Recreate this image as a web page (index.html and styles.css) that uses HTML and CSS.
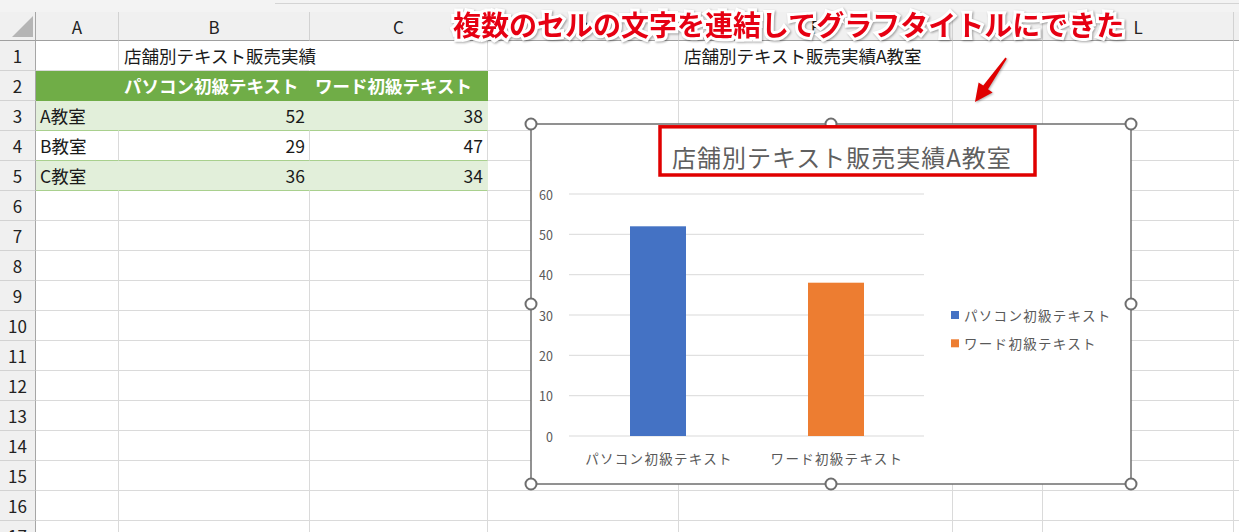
FILE: index.html
```html
<!DOCTYPE html>
<html lang="ja">
<head>
<meta charset="utf-8">
<title>店舗別テキスト販売実績</title>
<link rel="stylesheet" href="styles.css">
</head>
<body>
<div class="top"><div class="topline"></div></div>
<div class="sheet">
  <div class="corner"><span class="tri"></span></div>
  <div class="ch">A</div><div class="ch">B</div><div class="ch">C</div><div class="ch">D</div><div class="ch">F</div><div class="ch">K</div><div class="ch">L</div><div class="ch"></div>

  <div class="rh">1</div><div></div><div class="over">店舗別テキスト販売実績</div><div></div><div></div><div class="tx">店舗別テキスト販売実績A教室</div><div></div><div></div><div></div>

  <div class="rh">2</div><div class="g2"></div><div class="g2">パソコン初級テキスト</div><div class="g2">ワード初級テキスト</div><div></div><div></div><div></div><div></div><div></div>

  <div class="rh">3</div><div class="g3">A教室</div><div class="g3 num">52</div><div class="g3 num">38</div><div></div><div></div><div></div><div></div><div></div>

  <div class="rh">4</div><div class="w4">B教室</div><div class="w4 num">29</div><div class="w4 num">47</div><div></div><div></div><div></div><div></div><div></div>

  <div class="rh">5</div><div class="g3">C教室</div><div class="g3 num">36</div><div class="g3 num">34</div><div></div><div></div><div></div><div></div><div></div>

  <div class="rh">6</div><div></div><div></div><div></div><div></div><div></div><div></div><div></div><div></div>
  <div class="rh">7</div><div></div><div></div><div></div><div></div><div></div><div></div><div></div><div></div>
  <div class="rh">8</div><div></div><div></div><div></div><div></div><div></div><div></div><div></div><div></div>
  <div class="rh">9</div><div></div><div></div><div></div><div></div><div></div><div></div><div></div><div></div>
  <div class="rh">10</div><div></div><div></div><div></div><div></div><div></div><div></div><div></div><div></div>
  <div class="rh">11</div><div></div><div></div><div></div><div></div><div></div><div></div><div></div><div></div>
  <div class="rh">12</div><div></div><div></div><div></div><div></div><div></div><div></div><div></div><div></div>
  <div class="rh">13</div><div></div><div></div><div></div><div></div><div></div><div></div><div></div><div></div>
  <div class="rh">14</div><div></div><div></div><div></div><div></div><div></div><div></div><div></div><div></div>
  <div class="rh">15</div><div></div><div></div><div></div><div></div><div></div><div></div><div></div><div></div>
  <div class="rh">16</div><div></div><div></div><div></div><div></div><div></div><div></div><div></div><div></div>
  <div class="rh">17</div><div></div><div></div><div></div><div></div><div></div><div></div><div></div><div></div>
</div>

<svg class="chart" width="614" height="374" viewBox="-7 -7 614 374">
  <rect class="frame" x="0" y="0" width="600" height="360"/>
  <g class="grid">
    <line x1="38" x2="393" y1="312" y2="312"/>
    <line x1="38" x2="393" y1="271.7" y2="271.7"/>
    <line x1="38" x2="393" y1="231.3" y2="231.3"/>
    <line x1="38" x2="393" y1="191" y2="191"/>
    <line x1="38" x2="393" y1="150.7" y2="150.7"/>
    <line x1="38" x2="393" y1="110.3" y2="110.3"/>
    <line x1="38" x2="393" y1="70" y2="70"/>
  </g>
  <g class="axis">
    <text x="22" y="312">0</text>
    <text x="22" y="271.7">10</text>
    <text x="22" y="231.3">20</text>
    <text x="22" y="191">30</text>
    <text x="22" y="150.7">40</text>
    <text x="22" y="110.3">50</text>
    <text x="22" y="70">60</text>
  </g>
  <rect class="bar-blue" x="99" y="102.3" width="56" height="209.7"/>
  <rect class="bar-orange" x="277" y="158.7" width="56" height="153.3"/>
  <g class="cat">
    <text x="128" y="334">パソコン初級テキスト</text>
    <text x="306" y="334">ワード初級テキスト</text>
  </g>
  <rect class="bar-blue" x="420" y="187" width="8" height="8"/>
  <text class="legend" x="433" y="191">パソコン初級テキスト</text>
  <rect class="bar-orange" x="420" y="215.3" width="8" height="8"/>
  <text class="legend" x="433" y="219">ワード初級テキスト</text>
  <g class="handle">
    <circle cx="0" cy="0" r="5.5"/>
    <circle cx="300" cy="0" r="5.5"/>
    <circle cx="600" cy="0" r="5.5"/>
    <circle cx="0" cy="180" r="5.5"/>
    <circle cx="600" cy="180" r="5.5"/>
    <circle cx="0" cy="360" r="5.5"/>
    <circle cx="300" cy="360" r="5.5"/>
    <circle cx="600" cy="360" r="5.5"/>
  </g>
  <rect class="titlebox" x="129" y="2.8" width="375" height="48.2"/>
  <text class="title" x="141" y="32">店舗別テキスト販売実績A教室</text>
</svg>

<div class="note">複数のセルの文字を連結してグラフタイトルにできた</div>

<svg class="arrow" width="50" height="60" viewBox="965 50 50 60">
  <polygon points="975,102 978.6,82.4 983.2,85.6 1005.4,57.5 1006.8,58.7 988,89.2 992.6,92.4"/>
</svg>
</body>
</html>
```

FILE: styles.css
```css
html, body {
  margin: 0;
  padding: 0;
  overflow: hidden;
  background: #ffffff;
}

body {
  width: 1239px;
  height: 532px;
  position: relative;
  font-family: "Noto Sans CJK JP", "Noto Sans", sans-serif;
}

.top {
  height: 12px;
  background: #f3f3f3;
  box-sizing: border-box;
  padding-top: 3px;
}

.topline {
  margin-left: 275px;
  border-top: 1px solid #d4d4d4;
}

.sheet {
  display: grid;
  grid-template-columns: 36px 83px 191px 178px 191px 274px 90px 191px 1fr;
  grid-template-rows: 29px;
  grid-auto-rows: 30px;
}

.sheet > div {
  box-sizing: border-box;
  border-right: 1px solid #dadada;
  border-bottom: 1px solid #dadada;
  display: flex;
  align-items: center;
  padding: 0 4px;
  white-space: nowrap;
  font-size: 17.5px;
  color: #1a1a1a;
  min-width: 0;
}

.sheet > .corner {
  background: #f0f0f0;
  border-right: 1px solid #a6a6a6;
  border-bottom: 1px solid #a0a0a0;
  justify-content: flex-end;
  align-items: flex-end;
  padding: 0 2px 3px 0;
}

.tri {
  display: block;
  width: 21px;
  height: 21px;
  background: #b5b5b5;
  clip-path: polygon(100% 0, 100% 100%, 0 100%);
}

.sheet > .ch {
  background: #f0f0f0;
  border-right-color: #d2d2d2;
  border-bottom-color: #a0a0a0;
  justify-content: center;
  font-size: 17px;
  color: #222222;
  padding: 0;
}

.sheet > .rh {
  background: #f0f0f0;
  border-right-color: #a6a6a6;
  border-bottom-color: #d2d2d2;
  justify-content: center;
  font-size: 17px;
  color: #222222;
  padding: 0;
}

.sheet > .over {
  border-right-color: transparent;
  padding-left: 5px;
  overflow: visible;
}

.sheet > .tx {
  padding-left: 5px;
}

.sheet > .g2 {
  background: #70ad47;
  border-right-color: #70ad47;
  border-bottom-color: #70ad47;
  color: #ffffff;
  font-weight: 700;
  padding-left: 5px;
}

.sheet > .g3 {
  background: #e2efda;
  border-right-color: #e2efda;
  border-bottom-color: #a9d08e;
}

.sheet > .w4 {
  border-bottom-color: #a9d08e;
}

.sheet > .num {
  justify-content: flex-end;
}

/* chart */
.chart {
  position: absolute;
  left: 524px;
  top: 117px;
  font-family: "Noto Sans CJK JP", "Noto Sans", sans-serif;
}

.frame {
  fill: #ffffff;
  stroke: #6e6e6e;
  stroke-width: 1.5;
}

.grid line {
  stroke: #d9d9d9;
  stroke-width: 1;
}

.axis text {
  font-size: 12.5px;
  fill: #595959;
  text-anchor: end;
  dominant-baseline: central;
}

.bar-blue {
  fill: #4472c4;
}

.bar-orange {
  fill: #ed7d31;
}

.cat text {
  font-size: 13.5px;
  letter-spacing: 1.3px;
  fill: #595959;
  text-anchor: middle;
  dominant-baseline: central;
}

.legend {
  font-size: 13.5px;
  letter-spacing: 1.3px;
  fill: #595959;
  dominant-baseline: central;
}

.handle circle {
  fill: #ffffff;
  stroke: #6e6e6e;
  stroke-width: 2;
}

.titlebox {
  fill: #ffffff;
  stroke: #e00000;
  stroke-width: 3.5;
}

.title {
  font-size: 24px;
  letter-spacing: 1px;
  fill: #5f5f5f;
  dominant-baseline: central;
}

/* annotation */
.note {
  position: absolute;
  left: 453px;
  top: 10px;
  font-size: 28px;
  line-height: 28px;
  font-weight: 700;
  color: #e60012;
  white-space: nowrap;
  -webkit-text-stroke: 6px #ffffff;
  paint-order: stroke fill;
  filter: drop-shadow(1px 1px 1px rgba(0, 0, 0, 0.35));
}

.arrow {
  position: absolute;
  left: 965px;
  top: 50px;
  filter: drop-shadow(1px 1px 1px rgba(0, 0, 0, 0.3));
}

.arrow polygon {
  fill: #e00000;
}
```
